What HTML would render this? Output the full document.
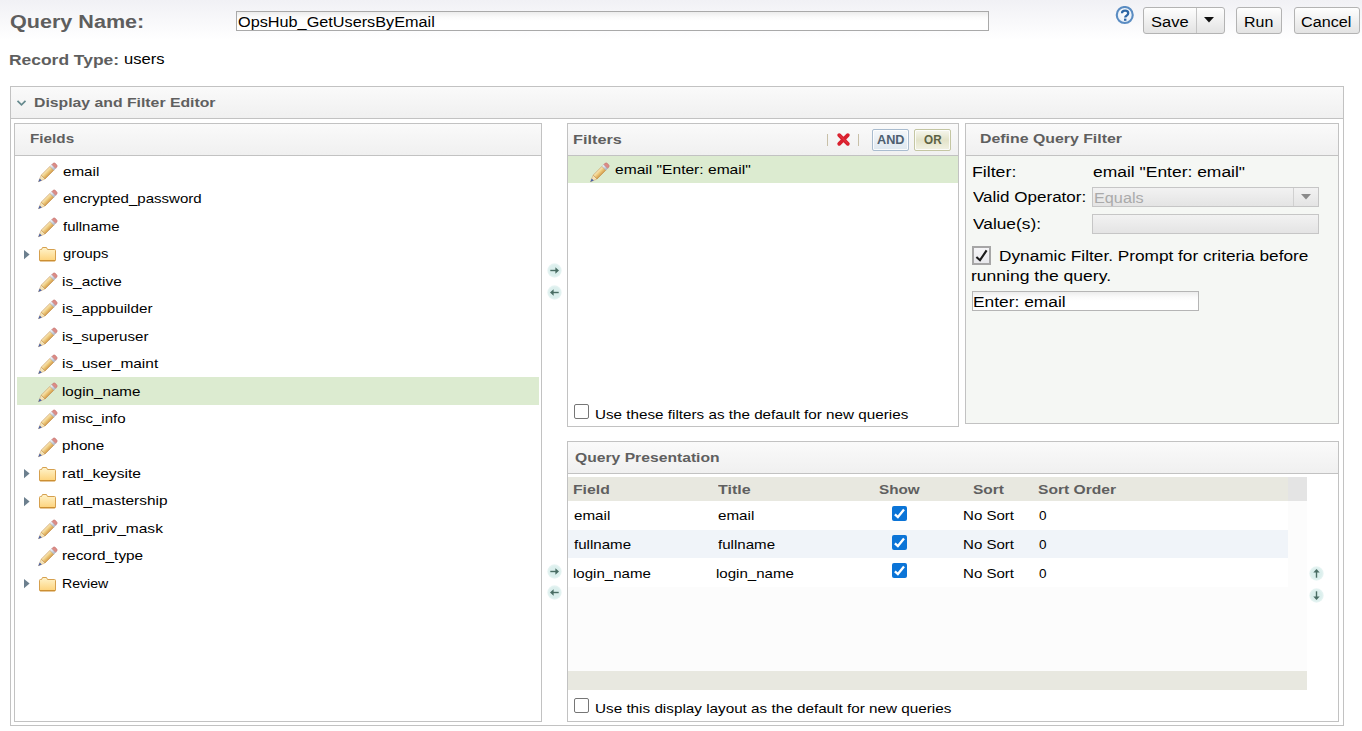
<!DOCTYPE html>
<html><head><meta charset="utf-8"><style>
html,body{margin:0;padding:0;width:1362px;height:731px;overflow:hidden;background:#fff;position:relative;font-family:"Liberation Sans",sans-serif}
.t{position:absolute;white-space:pre;line-height:22px;transform-origin:0 0;font-family:"Liberation Sans",sans-serif}
.ic{position:absolute;display:block}
.box{position:absolute;border:1px solid #c2c2c2}
.ph{position:absolute;background:linear-gradient(#fafafa,#f0f0f0)}
.hl{position:absolute;height:1px;background:#c2c2c2}
.btn{position:absolute;box-sizing:border-box;border:1px solid #b3b3b3;border-radius:3px;background:linear-gradient(#fefefe,#e3e3e3)}
.ao{position:absolute;border:1px solid;border-radius:2px;box-shadow:inset 0 0 0 1px rgba(255,255,255,0.8)}
</style></head><body>
<div style="position:absolute;left:0;top:0;width:1362px;height:40px;background:linear-gradient(#f1f1f5,#ffffff)"></div><div style="position:absolute;left:236px;top:11px;width:751px;height:18px;border:1px solid #a9a9a9;background:linear-gradient(#ececec 0,#fafafa 5px,#fff 9px)"></div><svg class="ic" style="left:1115px;top:5.7px" width="20" height="20" viewBox="0 0 20 20"><defs><radialGradient id="hg" cx="0.5" cy="0.4" r="0.6"><stop offset="0" stop-color="#ffffff"/><stop offset="1" stop-color="#e6eef7"/></radialGradient></defs>
<circle cx="9.75" cy="9.0" r="8.0" fill="url(#hg)" stroke="#5a8cc2" stroke-width="2.1"/>
<path d="M7.0 7.3 Q7.0 4.7 10.1 4.7 Q13.2 4.7 13.2 7.2 Q13.2 8.8 11.5 9.7 Q10.2 10.4 10.2 11.6" stroke="#2e67a5" stroke-width="2.3" fill="none" stroke-linecap="butt"/>
<rect x="9.0" y="12.6" width="2.4" height="2.2" fill="#2e67a5"/></svg><div class="btn" style="left:1143px;top:7px;width:82px;height:27px"></div><div style="position:absolute;left:1196px;top:8px;width:1px;height:25px;background:#c4c4c4"></div><svg class="ic" style="left:1204px;top:17px" width="11" height="6" viewBox="0 0 11 6"><polygon points="0,0 10,0 5,5.5" fill="#111"/></svg><div class="btn" style="left:1236px;top:7px;width:46px;height:27px"></div><div class="btn" style="left:1294px;top:7px;width:66px;height:27px"></div><div class="box" style="left:10px;top:86px;width:1332px;height:638px;background:#fff"></div><div class="ph" style="left:11px;top:87px;width:1332px;height:31px"></div><div class="hl" style="left:11px;top:118px;width:1332px"></div><svg class="ic" style="left:16px;top:99px" width="11" height="8" viewBox="0 0 11 8"><path d="M1.5 1.8 L5.5 5.8 L9.5 1.8" stroke="#668a8e" stroke-width="1.7" fill="none"/></svg><div class="box" style="left:14px;top:123px;width:526px;height:597px;background:#fff"></div><div class="ph" style="left:15px;top:124px;width:526px;height:31px"></div><div class="hl" style="left:15px;top:155px;width:526px"></div><div style="position:absolute;left:17px;top:377px;width:522px;height:28px;background:#dcebd0"></div><svg class="ic" style="left:37.50px;top:162.00px;overflow:visible" width="22" height="22" viewBox="0 0 22 22"><defs>
<linearGradient id="pb1" x1="0" y1="0" x2="0" y2="1"><stop offset="0" stop-color="#faeac0"/><stop offset="0.45" stop-color="#efcd80"/><stop offset="1" stop-color="#d49c4c"/></linearGradient>
<linearGradient id="pf1" x1="0" y1="0" x2="0" y2="1"><stop offset="0" stop-color="#f4f6fa"/><stop offset="1" stop-color="#a9b1c2"/></linearGradient></defs>
<g transform="translate(0.5,19.7) rotate(-45)">
<polygon points="0,0 3.2,-1.4 6.6,-2.7 6.6,2.7 3.2,1.4" fill="#f3e2b8" stroke="#c89850" stroke-width="0.4"/>
<polygon points="-0.3,0 3.2,-1.5 3.2,1.5" fill="#4a62a8"/>
<rect x="6.6" y="-2.7" width="12.4" height="5.4" fill="url(#pb1)" stroke="#bb843c" stroke-width="0.5"/>
<rect x="19" y="-2.7" width="2.6" height="5.4" fill="url(#pf1)" stroke="#9aa2b2" stroke-width="0.35"/>
<path d="M21.6 -2.7 H23.4 Q24.9 -2.7 24.9 0 Q24.9 2.7 23.4 2.7 H21.6 Z" fill="#dc8c86" stroke="#b86a66" stroke-width="0.4"/>
</g></svg><svg class="ic" style="left:37.50px;top:189.45px;overflow:visible" width="22" height="22" viewBox="0 0 22 22"><defs>
<linearGradient id="pb2" x1="0" y1="0" x2="0" y2="1"><stop offset="0" stop-color="#faeac0"/><stop offset="0.45" stop-color="#efcd80"/><stop offset="1" stop-color="#d49c4c"/></linearGradient>
<linearGradient id="pf2" x1="0" y1="0" x2="0" y2="1"><stop offset="0" stop-color="#f4f6fa"/><stop offset="1" stop-color="#a9b1c2"/></linearGradient></defs>
<g transform="translate(0.5,19.7) rotate(-45)">
<polygon points="0,0 3.2,-1.4 6.6,-2.7 6.6,2.7 3.2,1.4" fill="#f3e2b8" stroke="#c89850" stroke-width="0.4"/>
<polygon points="-0.3,0 3.2,-1.5 3.2,1.5" fill="#4a62a8"/>
<rect x="6.6" y="-2.7" width="12.4" height="5.4" fill="url(#pb2)" stroke="#bb843c" stroke-width="0.5"/>
<rect x="19" y="-2.7" width="2.6" height="5.4" fill="url(#pf2)" stroke="#9aa2b2" stroke-width="0.35"/>
<path d="M21.6 -2.7 H23.4 Q24.9 -2.7 24.9 0 Q24.9 2.7 23.4 2.7 H21.6 Z" fill="#dc8c86" stroke="#b86a66" stroke-width="0.4"/>
</g></svg><svg class="ic" style="left:37.50px;top:216.90px;overflow:visible" width="22" height="22" viewBox="0 0 22 22"><defs>
<linearGradient id="pb3" x1="0" y1="0" x2="0" y2="1"><stop offset="0" stop-color="#faeac0"/><stop offset="0.45" stop-color="#efcd80"/><stop offset="1" stop-color="#d49c4c"/></linearGradient>
<linearGradient id="pf3" x1="0" y1="0" x2="0" y2="1"><stop offset="0" stop-color="#f4f6fa"/><stop offset="1" stop-color="#a9b1c2"/></linearGradient></defs>
<g transform="translate(0.5,19.7) rotate(-45)">
<polygon points="0,0 3.2,-1.4 6.6,-2.7 6.6,2.7 3.2,1.4" fill="#f3e2b8" stroke="#c89850" stroke-width="0.4"/>
<polygon points="-0.3,0 3.2,-1.5 3.2,1.5" fill="#4a62a8"/>
<rect x="6.6" y="-2.7" width="12.4" height="5.4" fill="url(#pb3)" stroke="#bb843c" stroke-width="0.5"/>
<rect x="19" y="-2.7" width="2.6" height="5.4" fill="url(#pf3)" stroke="#9aa2b2" stroke-width="0.35"/>
<path d="M21.6 -2.7 H23.4 Q24.9 -2.7 24.9 0 Q24.9 2.7 23.4 2.7 H21.6 Z" fill="#dc8c86" stroke="#b86a66" stroke-width="0.4"/>
</g></svg><svg class="ic" style="left:24px;top:250px" width="6" height="10" viewBox="0 0 6 10"><polygon points="0,0 5.6,4.6 0,9.2" fill="#6c7f8e"/></svg><svg class="ic" style="left:39px;top:247px" width="18" height="15" viewBox="0 0 18 15">
<defs><linearGradient id="fg" x1="0" y1="0" x2="0" y2="1"><stop offset="0" stop-color="#fff4cc"/><stop offset="1" stop-color="#fdd27a"/></linearGradient></defs>
<path d="M3.5 0.5 H7.5 L8.5 2.5 H15.5 Q16.5 2.5 16.5 3.5 V13 Q16.5 14 15.5 14 H1.5 Q0.5 14 0.5 13 V3.5 Q0.5 2.5 1.5 2.5 H2.5 Z" fill="url(#fg)" stroke="#d6a04e" stroke-width="1"/>
<path d="M1 13.6 H16" stroke="#c98a2e" stroke-width="1"/>
</svg><svg class="ic" style="left:37.50px;top:271.80px;overflow:visible" width="22" height="22" viewBox="0 0 22 22"><defs>
<linearGradient id="pb4" x1="0" y1="0" x2="0" y2="1"><stop offset="0" stop-color="#faeac0"/><stop offset="0.45" stop-color="#efcd80"/><stop offset="1" stop-color="#d49c4c"/></linearGradient>
<linearGradient id="pf4" x1="0" y1="0" x2="0" y2="1"><stop offset="0" stop-color="#f4f6fa"/><stop offset="1" stop-color="#a9b1c2"/></linearGradient></defs>
<g transform="translate(0.5,19.7) rotate(-45)">
<polygon points="0,0 3.2,-1.4 6.6,-2.7 6.6,2.7 3.2,1.4" fill="#f3e2b8" stroke="#c89850" stroke-width="0.4"/>
<polygon points="-0.3,0 3.2,-1.5 3.2,1.5" fill="#4a62a8"/>
<rect x="6.6" y="-2.7" width="12.4" height="5.4" fill="url(#pb4)" stroke="#bb843c" stroke-width="0.5"/>
<rect x="19" y="-2.7" width="2.6" height="5.4" fill="url(#pf4)" stroke="#9aa2b2" stroke-width="0.35"/>
<path d="M21.6 -2.7 H23.4 Q24.9 -2.7 24.9 0 Q24.9 2.7 23.4 2.7 H21.6 Z" fill="#dc8c86" stroke="#b86a66" stroke-width="0.4"/>
</g></svg><svg class="ic" style="left:37.50px;top:299.25px;overflow:visible" width="22" height="22" viewBox="0 0 22 22"><defs>
<linearGradient id="pb5" x1="0" y1="0" x2="0" y2="1"><stop offset="0" stop-color="#faeac0"/><stop offset="0.45" stop-color="#efcd80"/><stop offset="1" stop-color="#d49c4c"/></linearGradient>
<linearGradient id="pf5" x1="0" y1="0" x2="0" y2="1"><stop offset="0" stop-color="#f4f6fa"/><stop offset="1" stop-color="#a9b1c2"/></linearGradient></defs>
<g transform="translate(0.5,19.7) rotate(-45)">
<polygon points="0,0 3.2,-1.4 6.6,-2.7 6.6,2.7 3.2,1.4" fill="#f3e2b8" stroke="#c89850" stroke-width="0.4"/>
<polygon points="-0.3,0 3.2,-1.5 3.2,1.5" fill="#4a62a8"/>
<rect x="6.6" y="-2.7" width="12.4" height="5.4" fill="url(#pb5)" stroke="#bb843c" stroke-width="0.5"/>
<rect x="19" y="-2.7" width="2.6" height="5.4" fill="url(#pf5)" stroke="#9aa2b2" stroke-width="0.35"/>
<path d="M21.6 -2.7 H23.4 Q24.9 -2.7 24.9 0 Q24.9 2.7 23.4 2.7 H21.6 Z" fill="#dc8c86" stroke="#b86a66" stroke-width="0.4"/>
</g></svg><svg class="ic" style="left:37.50px;top:326.70px;overflow:visible" width="22" height="22" viewBox="0 0 22 22"><defs>
<linearGradient id="pb6" x1="0" y1="0" x2="0" y2="1"><stop offset="0" stop-color="#faeac0"/><stop offset="0.45" stop-color="#efcd80"/><stop offset="1" stop-color="#d49c4c"/></linearGradient>
<linearGradient id="pf6" x1="0" y1="0" x2="0" y2="1"><stop offset="0" stop-color="#f4f6fa"/><stop offset="1" stop-color="#a9b1c2"/></linearGradient></defs>
<g transform="translate(0.5,19.7) rotate(-45)">
<polygon points="0,0 3.2,-1.4 6.6,-2.7 6.6,2.7 3.2,1.4" fill="#f3e2b8" stroke="#c89850" stroke-width="0.4"/>
<polygon points="-0.3,0 3.2,-1.5 3.2,1.5" fill="#4a62a8"/>
<rect x="6.6" y="-2.7" width="12.4" height="5.4" fill="url(#pb6)" stroke="#bb843c" stroke-width="0.5"/>
<rect x="19" y="-2.7" width="2.6" height="5.4" fill="url(#pf6)" stroke="#9aa2b2" stroke-width="0.35"/>
<path d="M21.6 -2.7 H23.4 Q24.9 -2.7 24.9 0 Q24.9 2.7 23.4 2.7 H21.6 Z" fill="#dc8c86" stroke="#b86a66" stroke-width="0.4"/>
</g></svg><svg class="ic" style="left:37.50px;top:354.15px;overflow:visible" width="22" height="22" viewBox="0 0 22 22"><defs>
<linearGradient id="pb7" x1="0" y1="0" x2="0" y2="1"><stop offset="0" stop-color="#faeac0"/><stop offset="0.45" stop-color="#efcd80"/><stop offset="1" stop-color="#d49c4c"/></linearGradient>
<linearGradient id="pf7" x1="0" y1="0" x2="0" y2="1"><stop offset="0" stop-color="#f4f6fa"/><stop offset="1" stop-color="#a9b1c2"/></linearGradient></defs>
<g transform="translate(0.5,19.7) rotate(-45)">
<polygon points="0,0 3.2,-1.4 6.6,-2.7 6.6,2.7 3.2,1.4" fill="#f3e2b8" stroke="#c89850" stroke-width="0.4"/>
<polygon points="-0.3,0 3.2,-1.5 3.2,1.5" fill="#4a62a8"/>
<rect x="6.6" y="-2.7" width="12.4" height="5.4" fill="url(#pb7)" stroke="#bb843c" stroke-width="0.5"/>
<rect x="19" y="-2.7" width="2.6" height="5.4" fill="url(#pf7)" stroke="#9aa2b2" stroke-width="0.35"/>
<path d="M21.6 -2.7 H23.4 Q24.9 -2.7 24.9 0 Q24.9 2.7 23.4 2.7 H21.6 Z" fill="#dc8c86" stroke="#b86a66" stroke-width="0.4"/>
</g></svg><svg class="ic" style="left:37.50px;top:381.60px;overflow:visible" width="22" height="22" viewBox="0 0 22 22"><defs>
<linearGradient id="pb8" x1="0" y1="0" x2="0" y2="1"><stop offset="0" stop-color="#faeac0"/><stop offset="0.45" stop-color="#efcd80"/><stop offset="1" stop-color="#d49c4c"/></linearGradient>
<linearGradient id="pf8" x1="0" y1="0" x2="0" y2="1"><stop offset="0" stop-color="#f4f6fa"/><stop offset="1" stop-color="#a9b1c2"/></linearGradient></defs>
<g transform="translate(0.5,19.7) rotate(-45)">
<polygon points="0,0 3.2,-1.4 6.6,-2.7 6.6,2.7 3.2,1.4" fill="#f3e2b8" stroke="#c89850" stroke-width="0.4"/>
<polygon points="-0.3,0 3.2,-1.5 3.2,1.5" fill="#4a62a8"/>
<rect x="6.6" y="-2.7" width="12.4" height="5.4" fill="url(#pb8)" stroke="#bb843c" stroke-width="0.5"/>
<rect x="19" y="-2.7" width="2.6" height="5.4" fill="url(#pf8)" stroke="#9aa2b2" stroke-width="0.35"/>
<path d="M21.6 -2.7 H23.4 Q24.9 -2.7 24.9 0 Q24.9 2.7 23.4 2.7 H21.6 Z" fill="#dc8c86" stroke="#b86a66" stroke-width="0.4"/>
</g></svg><svg class="ic" style="left:37.50px;top:409.05px;overflow:visible" width="22" height="22" viewBox="0 0 22 22"><defs>
<linearGradient id="pb9" x1="0" y1="0" x2="0" y2="1"><stop offset="0" stop-color="#faeac0"/><stop offset="0.45" stop-color="#efcd80"/><stop offset="1" stop-color="#d49c4c"/></linearGradient>
<linearGradient id="pf9" x1="0" y1="0" x2="0" y2="1"><stop offset="0" stop-color="#f4f6fa"/><stop offset="1" stop-color="#a9b1c2"/></linearGradient></defs>
<g transform="translate(0.5,19.7) rotate(-45)">
<polygon points="0,0 3.2,-1.4 6.6,-2.7 6.6,2.7 3.2,1.4" fill="#f3e2b8" stroke="#c89850" stroke-width="0.4"/>
<polygon points="-0.3,0 3.2,-1.5 3.2,1.5" fill="#4a62a8"/>
<rect x="6.6" y="-2.7" width="12.4" height="5.4" fill="url(#pb9)" stroke="#bb843c" stroke-width="0.5"/>
<rect x="19" y="-2.7" width="2.6" height="5.4" fill="url(#pf9)" stroke="#9aa2b2" stroke-width="0.35"/>
<path d="M21.6 -2.7 H23.4 Q24.9 -2.7 24.9 0 Q24.9 2.7 23.4 2.7 H21.6 Z" fill="#dc8c86" stroke="#b86a66" stroke-width="0.4"/>
</g></svg><svg class="ic" style="left:37.50px;top:436.50px;overflow:visible" width="22" height="22" viewBox="0 0 22 22"><defs>
<linearGradient id="pb10" x1="0" y1="0" x2="0" y2="1"><stop offset="0" stop-color="#faeac0"/><stop offset="0.45" stop-color="#efcd80"/><stop offset="1" stop-color="#d49c4c"/></linearGradient>
<linearGradient id="pf10" x1="0" y1="0" x2="0" y2="1"><stop offset="0" stop-color="#f4f6fa"/><stop offset="1" stop-color="#a9b1c2"/></linearGradient></defs>
<g transform="translate(0.5,19.7) rotate(-45)">
<polygon points="0,0 3.2,-1.4 6.6,-2.7 6.6,2.7 3.2,1.4" fill="#f3e2b8" stroke="#c89850" stroke-width="0.4"/>
<polygon points="-0.3,0 3.2,-1.5 3.2,1.5" fill="#4a62a8"/>
<rect x="6.6" y="-2.7" width="12.4" height="5.4" fill="url(#pb10)" stroke="#bb843c" stroke-width="0.5"/>
<rect x="19" y="-2.7" width="2.6" height="5.4" fill="url(#pf10)" stroke="#9aa2b2" stroke-width="0.35"/>
<path d="M21.6 -2.7 H23.4 Q24.9 -2.7 24.9 0 Q24.9 2.7 23.4 2.7 H21.6 Z" fill="#dc8c86" stroke="#b86a66" stroke-width="0.4"/>
</g></svg><svg class="ic" style="left:24px;top:469px" width="6" height="10" viewBox="0 0 6 10"><polygon points="0,0 5.6,4.6 0,9.2" fill="#6c7f8e"/></svg><svg class="ic" style="left:39px;top:467px" width="18" height="15" viewBox="0 0 18 15">
<defs><linearGradient id="fg" x1="0" y1="0" x2="0" y2="1"><stop offset="0" stop-color="#fff4cc"/><stop offset="1" stop-color="#fdd27a"/></linearGradient></defs>
<path d="M3.5 0.5 H7.5 L8.5 2.5 H15.5 Q16.5 2.5 16.5 3.5 V13 Q16.5 14 15.5 14 H1.5 Q0.5 14 0.5 13 V3.5 Q0.5 2.5 1.5 2.5 H2.5 Z" fill="url(#fg)" stroke="#d6a04e" stroke-width="1"/>
<path d="M1 13.6 H16" stroke="#c98a2e" stroke-width="1"/>
</svg><svg class="ic" style="left:24px;top:497px" width="6" height="10" viewBox="0 0 6 10"><polygon points="0,0 5.6,4.6 0,9.2" fill="#6c7f8e"/></svg><svg class="ic" style="left:39px;top:494px" width="18" height="15" viewBox="0 0 18 15">
<defs><linearGradient id="fg" x1="0" y1="0" x2="0" y2="1"><stop offset="0" stop-color="#fff4cc"/><stop offset="1" stop-color="#fdd27a"/></linearGradient></defs>
<path d="M3.5 0.5 H7.5 L8.5 2.5 H15.5 Q16.5 2.5 16.5 3.5 V13 Q16.5 14 15.5 14 H1.5 Q0.5 14 0.5 13 V3.5 Q0.5 2.5 1.5 2.5 H2.5 Z" fill="url(#fg)" stroke="#d6a04e" stroke-width="1"/>
<path d="M1 13.6 H16" stroke="#c98a2e" stroke-width="1"/>
</svg><svg class="ic" style="left:37.50px;top:518.85px;overflow:visible" width="22" height="22" viewBox="0 0 22 22"><defs>
<linearGradient id="pb11" x1="0" y1="0" x2="0" y2="1"><stop offset="0" stop-color="#faeac0"/><stop offset="0.45" stop-color="#efcd80"/><stop offset="1" stop-color="#d49c4c"/></linearGradient>
<linearGradient id="pf11" x1="0" y1="0" x2="0" y2="1"><stop offset="0" stop-color="#f4f6fa"/><stop offset="1" stop-color="#a9b1c2"/></linearGradient></defs>
<g transform="translate(0.5,19.7) rotate(-45)">
<polygon points="0,0 3.2,-1.4 6.6,-2.7 6.6,2.7 3.2,1.4" fill="#f3e2b8" stroke="#c89850" stroke-width="0.4"/>
<polygon points="-0.3,0 3.2,-1.5 3.2,1.5" fill="#4a62a8"/>
<rect x="6.6" y="-2.7" width="12.4" height="5.4" fill="url(#pb11)" stroke="#bb843c" stroke-width="0.5"/>
<rect x="19" y="-2.7" width="2.6" height="5.4" fill="url(#pf11)" stroke="#9aa2b2" stroke-width="0.35"/>
<path d="M21.6 -2.7 H23.4 Q24.9 -2.7 24.9 0 Q24.9 2.7 23.4 2.7 H21.6 Z" fill="#dc8c86" stroke="#b86a66" stroke-width="0.4"/>
</g></svg><svg class="ic" style="left:37.50px;top:546.30px;overflow:visible" width="22" height="22" viewBox="0 0 22 22"><defs>
<linearGradient id="pb12" x1="0" y1="0" x2="0" y2="1"><stop offset="0" stop-color="#faeac0"/><stop offset="0.45" stop-color="#efcd80"/><stop offset="1" stop-color="#d49c4c"/></linearGradient>
<linearGradient id="pf12" x1="0" y1="0" x2="0" y2="1"><stop offset="0" stop-color="#f4f6fa"/><stop offset="1" stop-color="#a9b1c2"/></linearGradient></defs>
<g transform="translate(0.5,19.7) rotate(-45)">
<polygon points="0,0 3.2,-1.4 6.6,-2.7 6.6,2.7 3.2,1.4" fill="#f3e2b8" stroke="#c89850" stroke-width="0.4"/>
<polygon points="-0.3,0 3.2,-1.5 3.2,1.5" fill="#4a62a8"/>
<rect x="6.6" y="-2.7" width="12.4" height="5.4" fill="url(#pb12)" stroke="#bb843c" stroke-width="0.5"/>
<rect x="19" y="-2.7" width="2.6" height="5.4" fill="url(#pf12)" stroke="#9aa2b2" stroke-width="0.35"/>
<path d="M21.6 -2.7 H23.4 Q24.9 -2.7 24.9 0 Q24.9 2.7 23.4 2.7 H21.6 Z" fill="#dc8c86" stroke="#b86a66" stroke-width="0.4"/>
</g></svg><svg class="ic" style="left:24px;top:579px" width="6" height="10" viewBox="0 0 6 10"><polygon points="0,0 5.6,4.6 0,9.2" fill="#6c7f8e"/></svg><svg class="ic" style="left:39px;top:577px" width="18" height="15" viewBox="0 0 18 15">
<defs><linearGradient id="fg" x1="0" y1="0" x2="0" y2="1"><stop offset="0" stop-color="#fff4cc"/><stop offset="1" stop-color="#fdd27a"/></linearGradient></defs>
<path d="M3.5 0.5 H7.5 L8.5 2.5 H15.5 Q16.5 2.5 16.5 3.5 V13 Q16.5 14 15.5 14 H1.5 Q0.5 14 0.5 13 V3.5 Q0.5 2.5 1.5 2.5 H2.5 Z" fill="url(#fg)" stroke="#d6a04e" stroke-width="1"/>
<path d="M1 13.6 H16" stroke="#c98a2e" stroke-width="1"/>
</svg><svg class="ic" style="left:546.9px;top:262.7px" width="15" height="15" viewBox="0 0 15 15"><defs><radialGradient id="agr"><stop offset="0" stop-color="#d9eeec"/><stop offset="0.7" stop-color="#dcefed"/><stop offset="1" stop-color="#e9f5f4"/></radialGradient></defs>
<circle cx="7.5" cy="7.5" r="7.2" fill="url(#agr)"/><g transform="rotate(0 7.5 7.5)"><path d="M3.3 7.5 H9.5" stroke="#4a6d64" stroke-width="1.4"/><polygon points="8.4,4.3 12.0,7.5 8.4,10.7" fill="#4a6d64"/></g></svg><svg class="ic" style="left:546.9px;top:284.8px" width="15" height="15" viewBox="0 0 15 15"><defs><radialGradient id="agl"><stop offset="0" stop-color="#d9eeec"/><stop offset="0.7" stop-color="#dcefed"/><stop offset="1" stop-color="#e9f5f4"/></radialGradient></defs>
<circle cx="7.5" cy="7.5" r="7.2" fill="url(#agl)"/><g transform="rotate(180 7.5 7.5)"><path d="M3.3 7.5 H9.5" stroke="#4a6d64" stroke-width="1.4"/><polygon points="8.4,4.3 12.0,7.5 8.4,10.7" fill="#4a6d64"/></g></svg><svg class="ic" style="left:546.9px;top:564.0px" width="15" height="15" viewBox="0 0 15 15"><defs><radialGradient id="agr"><stop offset="0" stop-color="#d9eeec"/><stop offset="0.7" stop-color="#dcefed"/><stop offset="1" stop-color="#e9f5f4"/></radialGradient></defs>
<circle cx="7.5" cy="7.5" r="7.2" fill="url(#agr)"/><g transform="rotate(0 7.5 7.5)"><path d="M3.3 7.5 H9.5" stroke="#4a6d64" stroke-width="1.4"/><polygon points="8.4,4.3 12.0,7.5 8.4,10.7" fill="#4a6d64"/></g></svg><svg class="ic" style="left:546.9px;top:584.9px" width="15" height="15" viewBox="0 0 15 15"><defs><radialGradient id="agl"><stop offset="0" stop-color="#d9eeec"/><stop offset="0.7" stop-color="#dcefed"/><stop offset="1" stop-color="#e9f5f4"/></radialGradient></defs>
<circle cx="7.5" cy="7.5" r="7.2" fill="url(#agl)"/><g transform="rotate(180 7.5 7.5)"><path d="M3.3 7.5 H9.5" stroke="#4a6d64" stroke-width="1.4"/><polygon points="8.4,4.3 12.0,7.5 8.4,10.7" fill="#4a6d64"/></g></svg><div class="box" style="left:567px;top:123px;width:390px;height:302px;background:#fff"></div><div class="ph" style="left:568px;top:124px;width:390px;height:31px"></div><div class="hl" style="left:568px;top:155px;width:390px"></div><div style="position:absolute;left:568px;top:156px;width:390px;height:27px;background:#dcebd0"></div><svg class="ic" style="left:589.50px;top:162.20px;overflow:visible" width="22" height="22" viewBox="0 0 22 22"><defs>
<linearGradient id="pb13" x1="0" y1="0" x2="0" y2="1"><stop offset="0" stop-color="#faeac0"/><stop offset="0.45" stop-color="#efcd80"/><stop offset="1" stop-color="#d49c4c"/></linearGradient>
<linearGradient id="pf13" x1="0" y1="0" x2="0" y2="1"><stop offset="0" stop-color="#f4f6fa"/><stop offset="1" stop-color="#a9b1c2"/></linearGradient></defs>
<g transform="translate(0.5,19.7) rotate(-45)">
<polygon points="0,0 3.2,-1.4 6.6,-2.7 6.6,2.7 3.2,1.4" fill="#f3e2b8" stroke="#c89850" stroke-width="0.4"/>
<polygon points="-0.3,0 3.2,-1.5 3.2,1.5" fill="#4a62a8"/>
<rect x="6.6" y="-2.7" width="12.4" height="5.4" fill="url(#pb13)" stroke="#bb843c" stroke-width="0.5"/>
<rect x="19" y="-2.7" width="2.6" height="5.4" fill="url(#pf13)" stroke="#9aa2b2" stroke-width="0.35"/>
<path d="M21.6 -2.7 H23.4 Q24.9 -2.7 24.9 0 Q24.9 2.7 23.4 2.7 H21.6 Z" fill="#dc8c86" stroke="#b86a66" stroke-width="0.4"/>
</g></svg><div style="position:absolute;left:827px;top:134px;width:1px;height:12px;background:#c8c0a8"></div><div style="position:absolute;left:858px;top:134px;width:1px;height:12px;background:#c8c0a8"></div><svg class="ic" style="left:836px;top:132px" width="15" height="15" viewBox="0 0 15 15"><path d="M3.2 3.2 L11.8 11.8 M11.8 3.2 L3.2 11.8" stroke="#d9202e" stroke-width="3.8" stroke-linecap="round"/><path d="M3.6 3.2 L11.4 11" stroke="#f0505a" stroke-width="1" stroke-linecap="round" opacity="0.6"/></svg><div class="ao" style="left:872px;top:129px;width:35px;height:20px;border-color:#a9bccf;background:linear-gradient(#f4f7fa,#e9eff5 50%,#dfe8f0)"></div><div class="ao" style="left:914px;top:129px;width:35px;height:20px;border-color:#c4c6a2;background:linear-gradient(#f7f7ef,#e3e3c9 50%,#f1f1e3)"></div><div class="ic" style="left:574px;top:404px;width:13px;height:13px;border:1px solid #767676;border-radius:2px;background:#fff"></div><div class="box" style="left:965px;top:123px;width:372px;height:299px;background:#f5f7f4"></div><div class="ph" style="left:966px;top:124px;width:372px;height:31px"></div><div class="hl" style="left:966px;top:155px;width:372px"></div><div style="position:absolute;left:1092px;top:187px;width:225px;height:18px;border:1px solid #c6c6c6;background:linear-gradient(#f2f2f2,#e4e4e4)"></div><div style="position:absolute;left:1293px;top:188px;width:1px;height:18px;background:#d0d0d0"></div><svg class="ic" style="left:1301px;top:194px" width="10" height="6" viewBox="0 0 10 6"><polygon points="0,0 10,0 5,5.5" fill="#8a8a8a"/></svg><div style="position:absolute;left:1092px;top:214px;width:225px;height:18px;border:1px solid #c6c6c6;background:linear-gradient(#f2f2f2,#e4e4e4)"></div><div style="position:absolute;left:972px;top:246px;width:15px;height:15px;border:2px solid #a6a6a6;background:linear-gradient(#f6f6f8,#e8e8ec)"></div><svg class="ic" style="left:972px;top:246px" width="19" height="19" viewBox="0 0 19 19"><path d="M4.4 11.0 L8.0 14.2 L14.6 4.4" stroke="#1a1a1a" stroke-width="2.1" fill="none"/></svg><div style="position:absolute;left:972px;top:291px;width:225px;height:18px;border:1px solid #b5b5b5;background:linear-gradient(#ececec 0,#fafafa 5px,#fff 9px)"></div><div class="box" style="left:567px;top:441px;width:770px;height:279px;background:#fff"></div><div class="ph" style="left:568px;top:442px;width:770px;height:31px"></div><div class="hl" style="left:568px;top:473px;width:770px"></div><div style="position:absolute;left:568px;top:477px;width:720px;height:24px;background:#e8e8e0"></div><div style="position:absolute;left:1288px;top:477px;width:19px;height:24px;background:#e4e4e4"></div><div style="position:absolute;left:568px;top:501px;width:739px;height:170px;background:#fcfcfc"></div><div style="position:absolute;left:568px;top:501px;width:720px;height:29px;background:#fff"></div><div style="position:absolute;left:568px;top:530px;width:720px;height:28px;background:#f0f4f9"></div><div style="position:absolute;left:568px;top:558px;width:720px;height:29px;background:#fff"></div><div style="position:absolute;left:568px;top:671px;width:739px;height:19px;background:#e8e8e0"></div><svg class="ic" style="left:891.7px;top:506px" width="15" height="15" viewBox="0 0 15 15"><rect x="0" y="0" width="15" height="15" rx="2" fill="#0b74d7"/><path d="M2.9 8.3 L5.9 11.1 L12.0 3.6" stroke="#fff" stroke-width="2.3" fill="none"/></svg><svg class="ic" style="left:891.7px;top:534.5px" width="15" height="15" viewBox="0 0 15 15"><rect x="0" y="0" width="15" height="15" rx="2" fill="#0b74d7"/><path d="M2.9 8.3 L5.9 11.1 L12.0 3.6" stroke="#fff" stroke-width="2.3" fill="none"/></svg><svg class="ic" style="left:891.7px;top:563px" width="15" height="15" viewBox="0 0 15 15"><rect x="0" y="0" width="15" height="15" rx="2" fill="#0b74d7"/><path d="M2.9 8.3 L5.9 11.1 L12.0 3.6" stroke="#fff" stroke-width="2.3" fill="none"/></svg><svg class="ic" style="left:1309.0px;top:566.0px" width="15" height="15" viewBox="0 0 15 15"><defs><radialGradient id="agu"><stop offset="0" stop-color="#d9eeec"/><stop offset="0.7" stop-color="#dcefed"/><stop offset="1" stop-color="#e9f5f4"/></radialGradient></defs>
<circle cx="7.5" cy="7.5" r="7.2" fill="url(#agu)"/><g transform="rotate(270 7.5 7.5)"><path d="M3.3 7.5 H9.5" stroke="#4a6d64" stroke-width="1.4"/><polygon points="8.4,4.3 12.0,7.5 8.4,10.7" fill="#4a6d64"/></g></svg><svg class="ic" style="left:1309.0px;top:588.0px" width="15" height="15" viewBox="0 0 15 15"><defs><radialGradient id="agd"><stop offset="0" stop-color="#d9eeec"/><stop offset="0.7" stop-color="#dcefed"/><stop offset="1" stop-color="#e9f5f4"/></radialGradient></defs>
<circle cx="7.5" cy="7.5" r="7.2" fill="url(#agd)"/><g transform="rotate(90 7.5 7.5)"><path d="M3.3 7.5 H9.5" stroke="#4a6d64" stroke-width="1.4"/><polygon points="8.4,4.3 12.0,7.5 8.4,10.7" fill="#4a6d64"/></g></svg><div class="ic" style="left:574px;top:698px;width:13px;height:13px;border:1px solid #767676;border-radius:2px;background:#fff"></div>
<div class="t" style="left:10.00px;top:11.0px;font-size:18px;font-weight:700;color:#5e5e5e;transform:scaleX(1.1982);">Query Name:</div>
<div class="t" style="left:8.84px;top:49.0px;font-size:15px;font-weight:700;color:#5e5e5e;transform:scaleX(1.1613);">Record Type:</div>
<div class="t" style="left:124.23px;top:48.0px;font-size:15.5px;font-weight:400;color:#000;transform:scaleX(1.0703);">users</div>
<div class="t" style="left:237.60px;top:11.0px;font-size:15.5px;font-weight:400;color:#000;transform:scaleX(1.0481);">OpsHub_GetUsersByEmail</div>
<div class="t" style="left:1151.24px;top:11.0px;font-size:15.5px;font-weight:400;color:#000;transform:scaleX(1.0647);">Save</div>
<div class="t" style="left:1244.37px;top:11.0px;font-size:15.5px;font-weight:400;color:#000;transform:scaleX(1.0296);">Run</div>
<div class="t" style="left:1301.46px;top:11.0px;font-size:15.5px;font-weight:400;color:#000;transform:scaleX(1.0426);">Cancel</div>
<div class="t" style="left:33.73px;top:92.0px;font-size:13.5px;font-weight:700;color:#5f5f5f;transform:scaleX(1.1688);">Display and Filter Editor</div>
<div class="t" style="left:29.67px;top:128.0px;font-size:13.5px;font-weight:700;color:#5f5f5f;transform:scaleX(1.1316);">Fields</div>
<div class="t" style="left:62.70px;top:161.0px;font-size:13.5px;font-weight:400;color:#000;transform:scaleX(1.1250);">email</div>
<div class="t" style="left:62.70px;top:188.0px;font-size:13.5px;font-weight:400;color:#000;transform:scaleX(1.1129);">encrypted_password</div>
<div class="t" style="left:62.70px;top:216.0px;font-size:13.5px;font-weight:400;color:#000;transform:scaleX(1.1078);">fullname</div>
<div class="t" style="left:62.70px;top:243.0px;font-size:13.5px;font-weight:400;color:#000;transform:scaleX(1.0976);">groups</div>
<div class="t" style="left:61.56px;top:271.0px;font-size:13.5px;font-weight:400;color:#000;transform:scaleX(1.1373);">is_active</div>
<div class="t" style="left:61.57px;top:298.0px;font-size:13.5px;font-weight:400;color:#000;transform:scaleX(1.1266);">is_appbuilder</div>
<div class="t" style="left:61.58px;top:326.0px;font-size:13.5px;font-weight:400;color:#000;transform:scaleX(1.1184);">is_superuser</div>
<div class="t" style="left:61.56px;top:353.0px;font-size:13.5px;font-weight:400;color:#000;transform:scaleX(1.1446);">is_user_maint</div>
<div class="t" style="left:61.58px;top:381.0px;font-size:13.5px;font-weight:400;color:#000;transform:scaleX(1.1232);">login_name</div>
<div class="t" style="left:61.58px;top:408.0px;font-size:13.5px;font-weight:400;color:#000;transform:scaleX(1.1161);">misc_info</div>
<div class="t" style="left:61.58px;top:435.0px;font-size:13.5px;font-weight:400;color:#000;transform:scaleX(1.1250);">phone</div>
<div class="t" style="left:61.54px;top:463.0px;font-size:13.5px;font-weight:400;color:#000;transform:scaleX(1.1567);">ratl_keysite</div>
<div class="t" style="left:61.56px;top:490.0px;font-size:13.5px;font-weight:400;color:#000;transform:scaleX(1.1429);">ratl_mastership</div>
<div class="t" style="left:61.55px;top:518.0px;font-size:13.5px;font-weight:400;color:#000;transform:scaleX(1.1494);">ratl_priv_mask</div>
<div class="t" style="left:61.56px;top:545.0px;font-size:13.5px;font-weight:400;color:#000;transform:scaleX(1.1386);">record_type</div>
<div class="t" style="left:61.65px;top:573.0px;font-size:13.5px;font-weight:400;color:#000;transform:scaleX(1.0455);">Review</div>
<div class="t" style="left:573.19px;top:129.0px;font-size:13.5px;font-weight:700;color:#5f5f5f;transform:scaleX(1.2051);">Filters</div>
<div class="t" style="left:614.80px;top:159.0px;font-size:13.5px;font-weight:400;color:#000;transform:scaleX(1.1538);">email "Enter: email"</div>
<div class="t" style="left:594.67px;top:404.0px;font-size:13.5px;font-weight:400;color:#000;transform:scaleX(1.1282);">Use these filters as the default for new queries</div>
<div class="t" style="left:980.12px;top:128.0px;font-size:13.5px;font-weight:700;color:#5f5f5f;transform:scaleX(1.1750);">Define Query Filter</div>
<div class="t" style="left:971.56px;top:161.0px;font-size:15.5px;font-weight:400;color:#000;transform:scaleX(1.1432);">Filter:</div>
<div class="t" style="left:1092.80px;top:161.0px;font-size:15.5px;font-weight:400;color:#000;transform:scaleX(1.1259);">email "Enter: email"</div>
<div class="t" style="left:972.70px;top:186.0px;font-size:15.5px;font-weight:400;color:#000;transform:scaleX(1.0980);">Valid Operator:</div>
<div class="t" style="left:1093.55px;top:187.0px;font-size:15.5px;font-weight:400;color:#aaaaaa;transform:scaleX(1.0478);">Equals</div>
<div class="t" style="left:972.70px;top:213.0px;font-size:15.5px;font-weight:400;color:#000;transform:scaleX(1.1167);">Value(s):</div>
<div class="t" style="left:998.89px;top:245.0px;font-size:15.5px;font-weight:400;color:#000;transform:scaleX(1.1119);">Dynamic Filter. Prompt for criteria before</div>
<div class="t" style="left:970.87px;top:265.0px;font-size:15.5px;font-weight:400;color:#000;transform:scaleX(1.1311);">running the query.</div>
<div class="t" style="left:972.58px;top:291.0px;font-size:15.5px;font-weight:400;color:#000;transform:scaleX(1.1210);">Enter: email</div>
<div class="t" style="left:574.90px;top:447.0px;font-size:13.5px;font-weight:700;color:#5f5f5f;transform:scaleX(1.1613);">Query Presentation</div>
<div class="t" style="left:876.80px;top:129.0px;font-size:12px;font-weight:700;color:#4e5f70;transform:scaleX(1.0577);">AND</div>
<div class="t" style="left:923.60px;top:129.0px;font-size:12px;font-weight:700;color:#5d6243;transform:scaleX(0.9778);">OR</div>
<div class="t" style="left:573.23px;top:479.0px;font-size:13.5px;font-weight:700;color:#5f5f5f;transform:scaleX(1.1667);">Field</div>
<div class="t" style="left:717.50px;top:479.0px;font-size:13.5px;font-weight:700;color:#5f5f5f;transform:scaleX(1.1852);">Title</div>
<div class="t" style="left:878.80px;top:479.0px;font-size:13.5px;font-weight:700;color:#5f5f5f;transform:scaleX(1.1306);">Show</div>
<div class="t" style="left:973.40px;top:479.0px;font-size:13.5px;font-weight:700;color:#5f5f5f;transform:scaleX(1.1481);">Sort</div>
<div class="t" style="left:1038.40px;top:479.0px;font-size:13.5px;font-weight:700;color:#5f5f5f;transform:scaleX(1.1559);">Sort Order</div>
<div class="t" style="left:574.40px;top:505.0px;font-size:13.5px;font-weight:400;color:#000;transform:scaleX(1.1250);">email</div>
<div class="t" style="left:717.50px;top:505.0px;font-size:13.5px;font-weight:400;color:#000;transform:scaleX(1.1250);">email</div>
<div class="t" style="left:962.98px;top:505.0px;font-size:13.5px;font-weight:400;color:#000;transform:scaleX(1.1156);">No Sort</div>
<div class="t" style="left:1039.00px;top:505.0px;font-size:13.5px;font-weight:400;color:#000;">0</div>
<div class="t" style="left:574.40px;top:534.0px;font-size:13.5px;font-weight:400;color:#000;transform:scaleX(1.1176);">fullname</div>
<div class="t" style="left:717.50px;top:534.0px;font-size:13.5px;font-weight:400;color:#000;transform:scaleX(1.1176);">fullname</div>
<div class="t" style="left:962.98px;top:534.0px;font-size:13.5px;font-weight:400;color:#000;transform:scaleX(1.1156);">No Sort</div>
<div class="t" style="left:1039.00px;top:534.0px;font-size:13.5px;font-weight:400;color:#000;">0</div>
<div class="t" style="left:573.28px;top:563.0px;font-size:13.5px;font-weight:400;color:#000;transform:scaleX(1.1159);">login_name</div>
<div class="t" style="left:716.38px;top:563.0px;font-size:13.5px;font-weight:400;color:#000;transform:scaleX(1.1159);">login_name</div>
<div class="t" style="left:962.98px;top:563.0px;font-size:13.5px;font-weight:400;color:#000;transform:scaleX(1.1156);">No Sort</div>
<div class="t" style="left:1039.00px;top:563.0px;font-size:13.5px;font-weight:400;color:#000;">0</div>
<div class="t" style="left:594.57px;top:698.0px;font-size:13.5px;font-weight:400;color:#000;transform:scaleX(1.1306);">Use this display layout as the default for new queries</div>
</body></html>
